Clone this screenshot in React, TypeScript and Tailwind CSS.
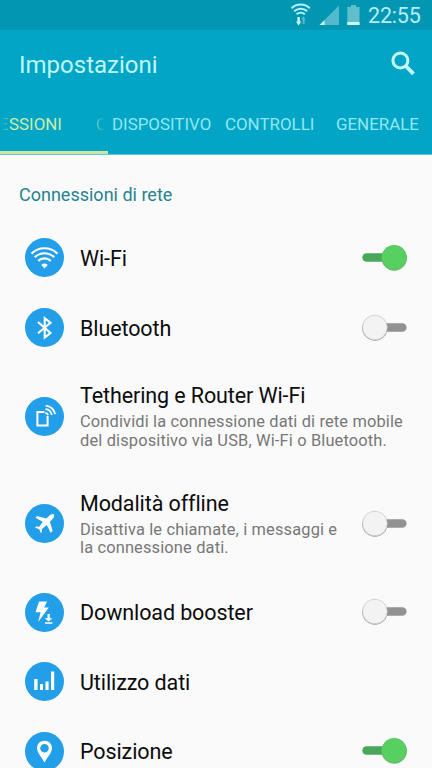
import type { ReactNode } from 'react';

function Arcs() {
  return (
    <g fill="none" stroke="#fff" strokeWidth="2.2">
      <path d="M6.5 15.6 A18.5 18.5 0 0 1 32.5 15.6" />
      <path d="M9.8 19.3 A13.7 13.7 0 0 1 29.2 19.3" />
      <path d="M13.2 22.9 A9 9 0 0 1 25.8 22.9" />
      <path d="M16.3 26.9 Q19.5 24.3 22.7 26.9 L19.5 30.6Z" fill="#fff" stroke="none" />
    </g>
  );
}

const icons: Record<string, ReactNode> = {
  wifi: <Arcs />,
  bluetooth: (
    <path d="M13 14 L25.5 25 L19.7 29.6 V10.2 L25.5 14.7 L13 25.2" fill="none" stroke="#fff" strokeWidth="2.1" />
  ),
  tether: (
    <g fill="none" stroke="#fff" strokeWidth="2">
      <path d="M19.5 14.9 H12.4 V28.6 H22.6 V19" />
      <g strokeWidth="1.8">
        <path d="M20.2 16.2 A3.2 3.2 0 0 1 23.2 18" />
        <path d="M20.5 12.2 A7 7 0 0 1 26.8 18" />
        <path d="M20.7 8.6 A10.5 10.5 0 0 1 30.2 17.2" />
      </g>
    </g>
  ),
  plane: (
    <path
      d="M28.8 10.4 C27.8 9.5 26 10.2 24.8 11.3 L21.2 14.5 L12 12 L10.5 13.8 L17.8 17.8 L14.2 22.7 L11 22.4 L10 23.6 L14.3 25.2 L15.7 29 L17 28 L16.9 24.9 L21.8 21 L25.6 28.7 L27.6 27 L25 17.8 L28 14.4 C29.2 12.9 29.6 11.3 28.8 10.4Z"
      fill="#fff"
    />
  ),
  booster: (
    <g fill="#fff">
      <path d="M14 8.5 H22 L19.2 14.6 H23.8 L13.2 29 L15.6 19.2 H10.5Z" />
      <path d="M22.5 21 H24.8 V25.2 H27.5 L23.6 28.5 L19.8 25.2 H22.5Z M20 29.3 H27.4 V30.7 H20Z" />
    </g>
  ),
  data: <path d="M9.2 17 H12.5 V28 H9.2Z M15 22 H18 V28 H15Z M20.5 19.5 H23.6 V28 H20.5Z M26 9.5 H29.2 V28 H26Z" fill="#fff" />,
  pin: (
    <path
      fillRule="evenodd"
      fill="#fff"
      d="M19.5 8.8 C15.2 8.8 12 12 12 16.1 C12 20.4 15.4 23.6 19.5 30.5 C23.6 23.6 27 20.4 27 16.1 C27 12 23.8 8.8 19.5 8.8Z M19.5 12 A4.3 4.3 0 1 1 19.5 20.6 A4.3 4.3 0 1 1 19.5 12Z"
    />
  ),
};

function Switch({ on }: { on: boolean }) {
  return (
    <svg className="mr-[24px] shrink-0" width="46" height="28" viewBox="0 0 46 28">
      <rect x="0.3" y="9.2" width="44.3" height="8.6" rx="4.3" fill={on ? '#4aa757' : '#929292'} />
      <circle cx={on ? 32.2 : 12.9} cy="14.2" r="12.6" fill={on ? '#7fa886' : '#9b9b9b'} />
      <circle cx={on ? 32.2 : 12.9} cy="13.5" r="12.3" fill={on ? '#58cf61' : '#f3f3f3'} stroke={on ? '#56c560' : '#c4c4c4'} strokeWidth="0.6" />
    </svg>
  );
}

function Row({ icon, title, lines, on }: { icon: string; title: string; lines?: string[]; on?: boolean }) {
  return (
    <div className={`flex shrink-0 items-center ${lines ? 'h-[107.5px]' : 'h-[69.6px]'}`}>
      <svg className="ml-[25px] mr-4 shrink-0" width="39" height="39" viewBox="0 0 39 39">
        <circle cx="19.5" cy="19.5" r="19.5" fill="#229fe8" />
        {icons[icon]}
      </svg>
      <div className="flex-1 whitespace-nowrap">
        <div className={`text-[21.5px] leading-[27px] tracking-[-0.1px] text-[#0c0c0c] [font-variant-ligatures:none] ${lines ? 'mb-[4px]' : 'pt-px'}`}>{title}</div>
        {lines?.map((line) => (
          <div key={line} className="text-[16.4px] leading-[18.5px] tracking-[0.16px] text-[#777]">{line}</div>
        ))}
      </div>
      {on !== undefined && <Switch on={on} />}
    </div>
  );
}

export default function App() {
  return (
    <div className="flex h-[768px] w-[432px] flex-col overflow-hidden bg-[#fafafa] font-['Roboto',sans-serif]">
      <div className="flex h-[30px] shrink-0 items-center justify-end bg-[#0296b3] text-[#b5eef6]">
        <svg width="80" height="30" viewBox="0 0 80 30">
          <g fill="none" stroke="#b5f3f8" strokeWidth="2">
            <path d="M11.5 8.2 A13 13 0 0 1 29.8 8.2" />
            <path d="M14.2 11.3 A9.3 9.3 0 0 1 27.2 11.3" />
            <path d="M16.6 14.3 A6 6 0 0 1 24.8 14.3" />
          </g>
          <path d="M17.4 17 H19.8 V21.5 H21.3 L18.6 25.5 L16 21.5 H17.4Z" fill="#c9fbfd" />
          <path d="M22.6 24 V19.5 H21.4 L23.4 16.3 L25.8 19.5 H24.6 V24Z" fill="#51bccd" />
          <path d="M59 5.5 V25 H39.5Z" fill="#53b9cc" />
          <path d="M44.5 20.3 V25 H39.5Z" fill="#c9fbfd" />
          <path d="M67.3 7 H71 V5 H76 V7 H79.5 V25 H67.3Z" fill="#61becd" />
          <path d="M67.3 22 H79.5 V25 H67.3Z" fill="#c9fbfd" />
        </svg>
        <span className="ml-[8px] mr-[11px] w-[53px] whitespace-nowrap pt-[2px] text-[21.5px] leading-[30px] tracking-[-0.2px]">22:55</span>
      </div>
      <header className="flex h-[70px] shrink-0 items-center justify-between bg-[#02a5c5] pl-[19px] pr-[16px]">
        <h1 className="text-[24px] font-normal leading-[30px] text-[#bff6fa]">Impostazioni</h1>
        <svg className="mb-[2px]" width="26" height="26" viewBox="0 0 26 26" fill="none" stroke="#c5fafd">
          <circle cx="10.4" cy="9.5" r="7.5" strokeWidth="3" />
          <path d="M15.8 15 L23.5 22.8" strokeWidth="3.8" />
        </svg>
      </header>
      <nav className="flex h-[55px] shrink-0 flex-col justify-between border-b border-[#66c6d7] bg-[#02a5c5]">
        <div className="flex h-[49px] items-center whitespace-nowrap text-[16.9px] text-[#91e8f4]">
          <div className="flex w-[112px] items-center text-[#c9eda9]">
            <span className="-ml-px w-[10px] bg-gradient-to-r from-transparent from-20% to-[#6cc9ba] bg-clip-text text-transparent">E</span>
            <span className="w-[87px]">SSIONI</span>
            <span className="w-[12px] bg-gradient-to-r from-[#6bd0ba] to-transparent to-80% bg-clip-text text-transparent">C</span>
          </div>
          <span className="w-[113px]">DISPOSITIVO</span>
          <span className="w-[111px]">CONTROLLI</span>
          <span>GENERALE</span>
        </div>
        <div className="h-[3px] w-[108px] bg-[#c9e7a0]" />
      </nav>
      <main className="flex flex-col">
        <h2 className="h-[68.2px] shrink-0 pl-[19px] pt-[29px] text-[18px] font-normal leading-[22px] text-[#27838f]">Connessioni di rete</h2>
        <Row icon="wifi" title="Wi-Fi" on />
        <Row icon="bluetooth" title="Bluetooth" on={false} />
        <Row icon="tether" title="Tethering e Router Wi-Fi" lines={['Condividi la connessione dati di rete mobile', 'del dispositivo via USB, Wi-Fi o Bluetooth.']} />
        <Row icon="plane" title="Modalità offline" lines={['Disattiva le chiamate, i messaggi e', 'la connessione dati.']} on={false} />
        <Row icon="booster" title="Download booster" on={false} />
        <Row icon="data" title="Utilizzo dati" />
        <Row icon="pin" title="Posizione" on />
      </main>
    </div>
  );
}
